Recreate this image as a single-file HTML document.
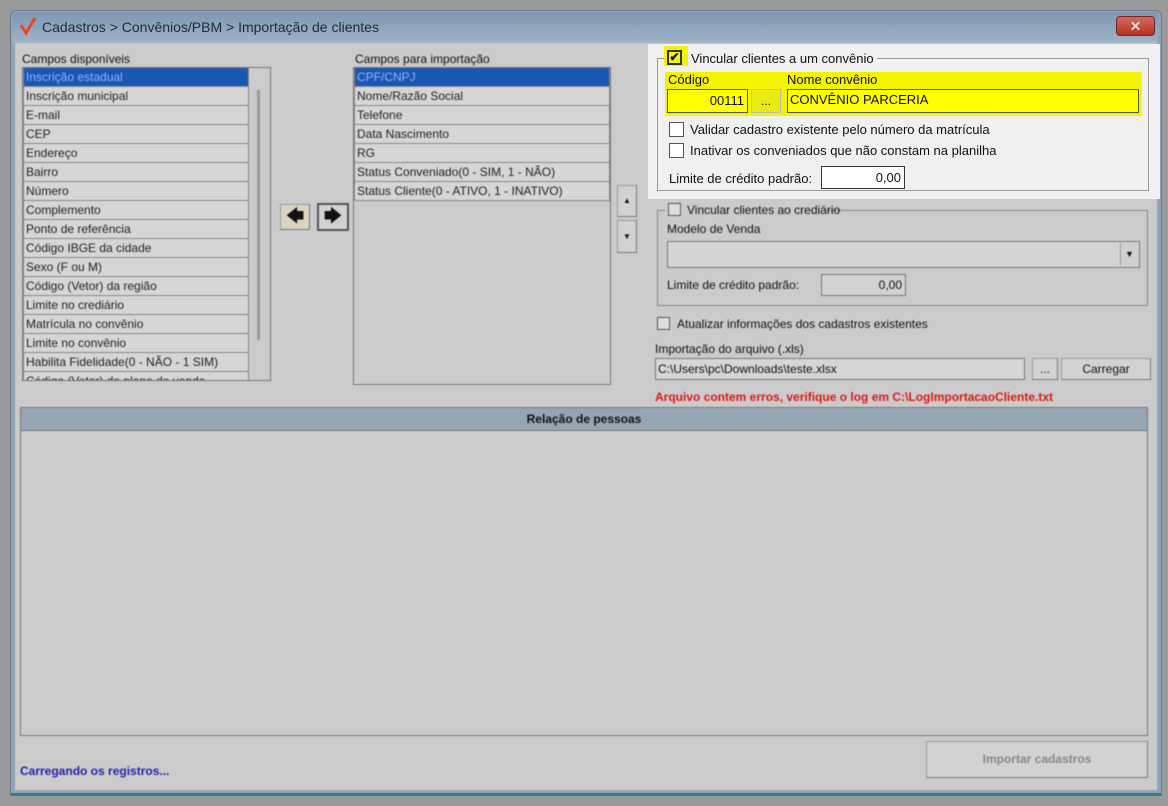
<!DOCTYPE html>
<html><head><meta charset="utf-8"><style>
*{box-sizing:border-box;margin:0;padding:0}
body{width:1168px;height:806px;background:#9a9a9a;position:relative;overflow:hidden;font-family:"Liberation Sans",sans-serif;font-size:12px;color:#111}
.a{position:absolute}
#win{left:10px;top:10px;width:1152px;height:786px;background:#8ea4b8;border:1px solid #6a7a88;border-radius:6px 6px 0 0;border-bottom:3px solid #3b7d86}
#title{left:12px;top:12px;width:1146px;height:31px;background:linear-gradient(#7f97b2,#9fb3c7)}
#client{left:15px;top:43px;width:1142px;height:747px;background:#cbcbcb;filter:blur(0.5px)}
.lbl{position:absolute;white-space:nowrap}
.list{position:absolute;border:1px solid #777;background:#cbcbcb}
.it{height:19px;line-height:18px;border:1px solid #888;border-top:none;padding-left:2px;background:#d6d6d6;white-space:nowrap;overflow:hidden;font-size:12px;color:#222}
.sel{background:#1b56b3;color:#8fb2ff}
.btn{position:absolute;background:#d2d2d2;border:1px solid #9a9a9a;border-right-color:#777;border-bottom-color:#777}
.chk{position:absolute;width:13px;height:13px;border:1px solid #555;background:#ddd}
.inp{position:absolute;border:1px solid #777;background:#d2d2d2}
#hl{left:648px;top:44px;width:512px;height:155px;background:#f0f0f0}
</style></head><body>
<div class="a" id="win"></div>
<div class="a" id="title"></div>
<svg class="a" style="left:18px;top:16px" width="20" height="20"><path d="M3 9 L8 17 L17 2" stroke="#e8491d" stroke-width="3" fill="none"/></svg>
<div class="lbl" style="left:42px;top:19px;font-size:14px;color:#1e2a38">Cadastros &gt; Convênios/PBM &gt; Importação de clientes</div>
<div class="a" style="left:1116px;top:16px;width:39px;height:20px;background:linear-gradient(#d46a5c,#b8301f);border:1px solid #6b2a22;border-radius:4px;color:#ddd;text-align:center;font-size:14px;line-height:18px;font-weight:bold">✕</div>
<div class="a" id="client">
 <div class="lbl" style="left:7px;top:9px">Campos disponíveis</div>
 <div class="list" style="left:7px;top:24px;width:249px;height:314px;overflow:hidden">
  <div style="width:226px">
  <div class="it sel">Inscrição estadual</div><div class="it">Inscrição municipal</div><div class="it">E-mail</div><div class="it">CEP</div><div class="it">Endereço</div><div class="it">Bairro</div><div class="it">Número</div><div class="it">Complemento</div><div class="it">Ponto de referência</div><div class="it">Código IBGE da cidade</div><div class="it">Sexo (F ou M)</div><div class="it">Código (Vetor) da região</div><div class="it">Limite no crediário</div><div class="it">Matrícula no convênio</div><div class="it">Limite no convênio</div><div class="it">Habilita Fidelidade(0 - NÃO - 1 SIM)</div><div class="it">Código (Vetor) do plano de venda</div>
  </div>
  <div class="a" style="left:234px;top:22px;width:3px;height:250px;background:#999"></div>
 </div>
 <div class="btn" style="left:265px;top:161px;width:30px;height:26px;background:#d8d4c4;font-size:18px;line-height:22px;text-align:center">🡄</div>
 <div class="btn" style="left:302px;top:160px;width:32px;height:28px;border:2px solid #555;font-size:18px;line-height:22px;text-align:center">🡆</div>
 <div class="lbl" style="left:340px;top:9px">Campos para importação</div>
 <div class="list" style="left:338px;top:24px;width:258px;height:318px">
  <div class="it sel">CPF/CNPJ</div><div class="it">Nome/Razão Social</div><div class="it">Telefone</div><div class="it">Data Nascimento</div><div class="it">RG</div><div class="it">Status Conveniado(0 - SIM, 1 - NÃO)</div><div class="it">Status Cliente(0 - ATIVO, 1 - INATIVO)</div>
 </div>
 <div class="btn" style="left:602px;top:142px;width:20px;height:32px;text-align:center;line-height:30px;font-size:8px">▲</div>
 <div class="btn" style="left:602px;top:177px;width:20px;height:33px;text-align:center;line-height:31px;font-size:8px">▼</div>
 <div class="a" style="left:642px;top:167px;width:491px;height:96px;border:1px solid #888"></div>
 <div class="a" style="left:650px;top:160px;width:160px;height:14px;background:#cbcbcb"></div>
 <div class="chk" style="left:653px;top:160px"></div>
 <div class="lbl" style="left:672px;top:160px">Vincular clientes ao crediário</div>
 <div class="lbl" style="left:652px;top:179px">Modelo de Venda</div>
 <div class="inp" style="left:652px;top:198px;width:473px;height:27px;background:#d4d4d4"><div class="a" style="right:1px;top:1px;width:18px;height:23px;background:#d0d0d0;border-left:1px solid #999;text-align:center;font-size:9px;line-height:23px">▼</div></div>
 <div class="lbl" style="left:652px;top:235px">Limite de crédito padrão:</div>
 <div class="inp" style="left:806px;top:231px;width:85px;height:22px;text-align:right;padding-right:3px;line-height:20px">0,00</div>
 <div class="chk" style="left:642px;top:274px"></div>
 <div class="lbl" style="left:662px;top:274px">Atualizar informações dos cadastros existentes</div>
 <div class="lbl" style="left:640px;top:299px">Importação do arquivo (.xls)</div>
 <div class="inp" style="left:640px;top:315px;width:370px;height:22px;background:#d6d6d6;line-height:20px;padding-left:2px">C:\Users\pc\Downloads\teste.xlsx</div>
 <div class="btn" style="left:1017px;top:315px;width:26px;height:22px;text-align:center;line-height:20px">...</div>
 <div class="btn" style="left:1046px;top:315px;width:90px;height:22px;text-align:center;line-height:20px">Carregar</div>
 <div class="lbl" style="left:640px;top:347px;color:#e01818;font-weight:bold">Arquivo contem erros, verifique o log em C:\LogImportacaoCliente.txt</div>
 <div class="a" style="left:5px;top:364px;width:1128px;height:329px;border:1px solid #777;background:#cbcbcb"></div>
 <div class="a" style="left:5px;top:364px;width:1128px;height:24px;background:#96a5b3;border:1px solid #777;text-align:center;font-weight:bold;line-height:22px">Relação de pessoas</div>
 <div class="lbl" style="left:5px;top:721px;color:#2323b0;font-weight:bold">Carregando os registros...</div>
 <div class="btn" style="left:911px;top:698px;width:222px;height:37px;text-align:center;line-height:35px;color:#888;font-weight:bold">Importar cadastros</div>
</div>
<div class="a" id="hl">
 <div class="a" style="left:9px;top:14px;width:492px;height:133px;border:1px solid #999"></div>
 <div class="a" style="left:16px;top:2px;width:24px;height:20px;background:#f4f400"></div>
 <div class="a" style="left:19px;top:6px;width:15px;height:15px;border:2px solid #333;background:#f4f400;font-size:12px;line-height:11px;text-align:center;font-weight:bold">✔</div>
 <div class="lbl" style="left:40px;top:7px;padding:0 3px;background:#f0f0f0;font-size:13px">Vincular clientes a um convênio</div>
 <div class="a" style="left:17px;top:28px;width:477px;height:44px;background:#f4f400"></div>
 <div class="lbl" style="left:20px;top:28px;font-size:13px">Código</div>
 <div class="lbl" style="left:139px;top:28px;font-size:13px">Nome convênio</div>
 <div class="a" style="left:19px;top:45px;width:81px;height:24px;border:1px solid #555;background:#ffff00;text-align:right;padding-right:3px;line-height:22px;font-size:13px">00111</div>
 <div class="a" style="left:103px;top:45px;width:30px;height:24px;border:1px solid #bbb;background:#eaea10;text-align:center;line-height:22px">...</div>
 <div class="a" style="left:139px;top:45px;width:352px;height:24px;border:1px solid #555;background:#ffff00;line-height:20px;padding-left:2px;font-size:13px">CONVÊNIO PARCERIA</div>
 <div class="chk" style="left:21px;top:78px;width:15px;height:15px;background:#fff"></div>
 <div class="lbl" style="left:42px;top:78px;font-size:13px">Validar cadastro existente pelo número da matrícula</div>
 <div class="chk" style="left:21px;top:99px;width:15px;height:15px;background:#fff"></div>
 <div class="lbl" style="left:42px;top:99px;font-size:13px">Inativar os conveniados que não constam na planilha</div>
 <div class="lbl" style="left:21px;top:127px;font-size:13px">Limite de crédito padrão:</div>
 <div class="a" style="left:173px;top:122px;width:84px;height:23px;border:1px solid #333;background:#fff;text-align:right;padding-right:3px;line-height:21px;font-size:13px">0,00</div>
</div>
</body></html>
